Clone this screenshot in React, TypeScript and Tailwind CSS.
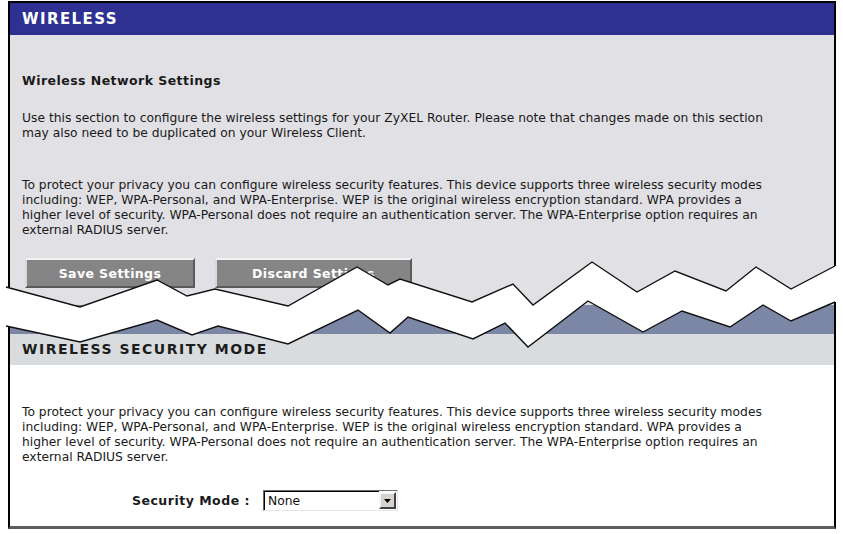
import React from 'react';

// points of the torn edge, page coordinates
const upperEdge: [number, number][] = [
  [6, 287], [80, 307], [157, 280], [187, 296], [215, 289], [288, 306], [357, 267],
  [388, 285], [400, 279], [472, 302], [513, 284], [533, 305], [592, 262], [637, 292],
  [675, 271], [726, 291], [756, 267], [791, 289], [835, 266],
];
const lowerEdge: [number, number][] = [
  [6, 326], [80, 342], [157, 320], [192, 335], [218, 326], [288, 344], [358, 310],
  [390, 333], [408, 317], [473, 339], [505, 323], [528, 347], [588, 301], [643, 332],
  [682, 311], [730, 327], [763, 305], [791, 321], [835, 302],
];

const toPts = (p: [number, number][]) => p.map(([x, y]) => `${x},${y}`).join(' ');

const Tear: React.FC = () => {
  const band = [...upperEdge, [839, 266] as [number, number], [839, 302] as [number, number], ...[...lowerEdge].reverse()];
  return (
    <svg className="absolute left-0 top-0 pointer-events-none" width="843" height="534" viewBox="0 0 843 534">
      <polygon points={toPts(band)} fill="#ffffff" />
      <polyline points={toPts(upperEdge)} fill="none" stroke="#111" strokeWidth="1.4" strokeLinejoin="miter" />
      <polyline points={toPts(lowerEdge)} fill="none" stroke="#111" strokeWidth="1.4" strokeLinejoin="miter" />
    </svg>
  );
};

const PanelButton: React.FC<{ label: string; width: string }> = ({ label, width }) => (
  <div
    className={`${width} h-[30px] flex items-center justify-center bg-[#858585] border-2 border-t-[#f4f4f4] border-l-[#d8d8d8] border-r-[#5a5a5a] border-b-[#5a5a5a] text-white font-bold text-[12.5px] tracking-[0.4px]`}
  >
    {label}
  </div>
);

const SelectBox: React.FC = () => (
  <div className="w-[135px] h-[21px] flex items-stretch bg-white border border-t-[#6d6d6d] border-l-[#6d6d6d] border-r-[#e6e6e6] border-b-[#e6e6e6]">
    <div className="flex-1 flex items-center pl-[3px] border-t border-l border-black text-[#111]">None</div>
    <div className="w-[17px] flex items-center justify-center bg-[#d6d3ce] border-2 border-t-[#f5f5f5] border-l-[#f5f5f5] border-r-[#404040] border-b-[#404040] my-[1px] mr-[1px]">
      <svg width="7" height="4" viewBox="0 0 7 4">
        <polygon points="0,0 7,0 3.5,4" fill="#000" />
      </svg>
    </div>
  </div>
);

export default function App() {
  return (
    <div className="relative w-[843px] h-[534px] bg-white overflow-hidden font-['DejaVu_Sans',sans-serif] text-[12.3px] leading-[15px] text-[#1a1a1a]">
      <div className="ml-[8px] mt-[1px] w-[828px] flex flex-col">
        {/* upper panel */}
        <div className="h-[304px] border-x-2 border-t-2 border-black bg-[#e1e0e4] flex flex-col">
          <div className="h-[32px] bg-[#2e3192] flex items-center pl-[12px] text-white font-bold text-[15px] tracking-[1.4px]">
            WIRELESS
          </div>
          <div className="px-[12px] pt-[38px] flex flex-col whitespace-nowrap">
            <div className="font-bold text-[12.5px] tracking-[0.45px]">Wireless Network Settings</div>
            <p className="mt-[23px]">
              Use this section to configure the wireless settings for your ZyXEL Router. Please note that changes made on this section
              <br />
              may also need to be duplicated on your Wireless Client.
            </p>
            <p className="mt-[37px]">
              To protect your privacy you can configure wireless security features. This device supports three wireless security modes
              <br />
              including: WEP, WPA-Personal, and WPA-Enterprise. WEP is the original wireless encryption standard. WPA provides a
              <br />
              higher level of security. WPA-Personal does not require an authentication server. The WPA-Enterprise option requires an
              <br />
              external RADIUS server.
            </p>
            <div className="mt-[20px] flex gap-[20px] pl-[3px]">
              <PanelButton label="Save Settings" width="w-[170px]" />
              <PanelButton label="Discard Settings" width="w-[197px]" />
            </div>
          </div>
        </div>

        {/* lower panel */}
        <div className="h-[224px] border-x-2 border-b-[3px] border-x-black border-b-[#5e5e5e] bg-white flex flex-col">
          <div className="h-[29px] bg-[#7b87a4]" />
          <div className="h-[31px] bg-[#d8dcdf] flex items-center pl-[12px] font-bold text-[14px] tracking-[1.5px] text-[#1c1c1c]">
            WIRELESS SECURITY MODE
          </div>
          <div className="px-[12px] pt-[40px] flex flex-col whitespace-nowrap">
            <p>
              To protect your privacy you can configure wireless security features. This device supports three wireless security modes
              <br />
              including: WEP, WPA-Personal, and WPA-Enterprise. WEP is the original wireless encryption standard. WPA provides a
              <br />
              higher level of security. WPA-Personal does not require an authentication server. The WPA-Enterprise option requires an
              <br />
              external RADIUS server.
            </p>
            <div className="mt-[25px] flex items-center">
              <div className="w-[241px] text-right pr-[13px] font-bold text-[12.5px] tracking-[0.5px]">Security Mode :</div>
              <SelectBox />
            </div>
          </div>
        </div>
      </div>
      <Tear />
    </div>
  );
}
